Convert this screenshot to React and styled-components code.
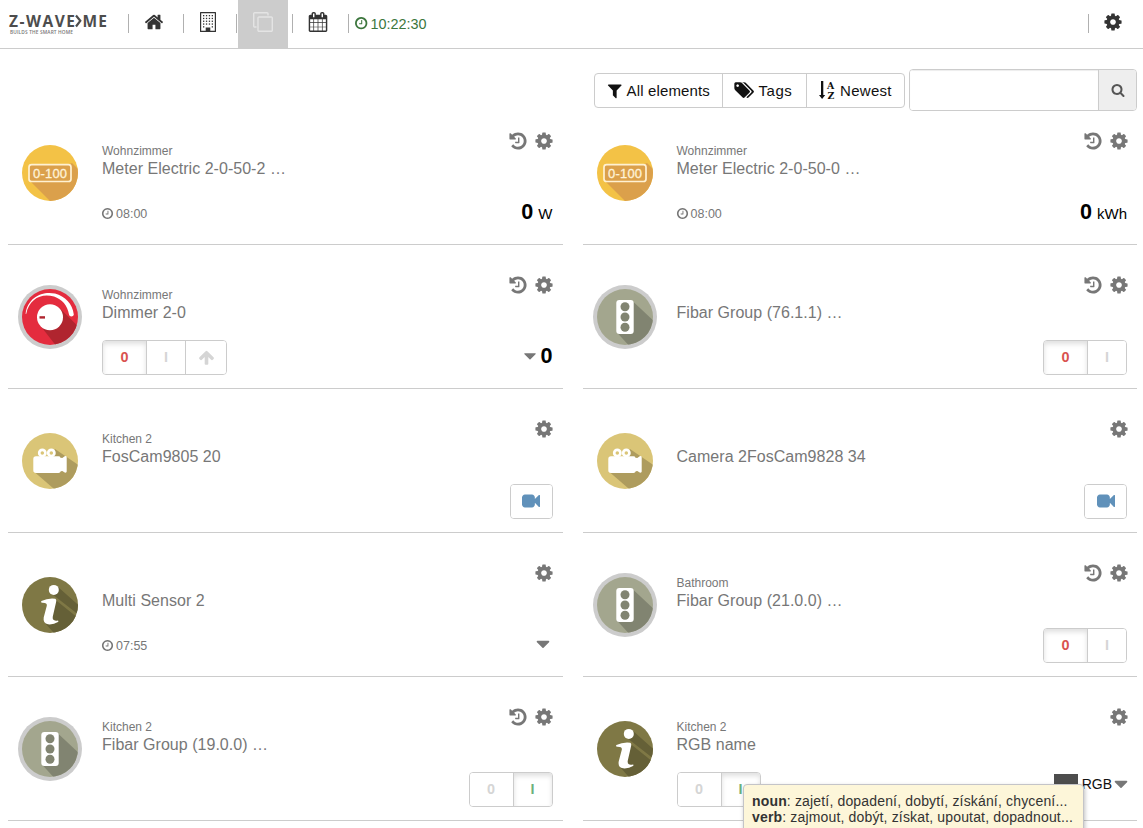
import React from 'react';
import styled, { createGlobalStyle, css } from 'styled-components';

const Global = createGlobalStyle`
  *, *::before, *::after { box-sizing: border-box; }
  html, body { margin: 0; padding: 0; }
  body {
    height: 828px;
    overflow: hidden;
    background: #fff;
    color: #111;
    font-family: "Liberation Sans", Arial, sans-serif;
    font-size: 14px;
  }
`;

const paths = {
  home: 'M1472 992v480q0 26-19 45t-45 19h-384v-384h-256v384h-384q-26 0-45-19t-19-45v-480q0-1 .5-3t.5-3l575-474 575 474q1 2 1 6zm223-69l-62 74q-8 9-21 11h-3q-13 0-21-7l-692-577-692 577q-12 8-24 7-13-2-21-11l-62-74q-8-10-7-23.5t11-21.5l719-599q32-26 76-26t76 26l244 204v-195q0-14 9-23t23-9h192q14 0 23 9t9 23v408l219 182q10 8 11 21.5t-7 23.5z',
  cog: 'M1152 896q0-106-75-181t-181-75-181 75-75 181 75 181 181 75 181-75 75-181zm512-109v222q0 12-8 23t-20 13l-185 28q-19 54-39 91 35 50 107 138 10 12 10 25t-9 23q-27 37-99 108t-94 71q-12 0-26-9l-138-108q-44 23-91 38-16 136-29 186-7 28-36 28h-222q-14 0-24.5-8.5t-11.5-21.5l-28-184q-49-16-90-37l-141 107q-10 9-25 9-14 0-25-11-126-114-165-168-7-10-7-23 0-12 8-23 15-21 51-66.5t54-70.5q-27-50-41-99l-183-27q-13-2-21-12.5t-8-23.5v-222q0-12 8-23t19-13l186-28q14-46 39-92-40-57-107-138-10-12-10-24 0-10 9-23 26-36 98.5-107.5t94.5-71.5q13 0 26 10l138 107q44-23 91-38 16-136 29-186 7-28 36-28h222q14 0 24.5 8.5t11.5 21.5l28 184q49 16 90 37l142-107q9-9 24-9 13 0 25 10 129 119 165 170 7 8 7 22 0 12-8 23-15 21-51 66.5t-54 70.5q26 50 41 98l183 28q13 2 21 12.5t8 23.5z',
  history: 'M1664 896q0 156-61 298t-164 245-245 164-298 61q-172 0-327-72.5t-264-204.5q-7-10-6.5-22.5t8.5-20.5l137-138q10-9 25-9 16 2 23 12 73 95 179 147t225 52q104 0 198.5-40.5t163.5-109.5 109.5-163.5 40.5-198.5-40.5-198.5-109.5-163.5-163.5-109.5-198.5-40.5q-98 0-188 35.5t-160 101.5l137 138q31 30 14 69-17 40-59 40h-448q-26 0-45-19t-19-45v-448q0-42 40-59 39-17 69 14l130 129q107-101 244.5-156.5t284.5-55.5q156 0 298 61t245 164 164 245 61 298zm-640-288v448q0 14-9 23t-23 9h-320q-14 0-23-9t-9-23v-64q0-14 9-23t23-9h224v-352q0-14 9-23t23-9h64q14 0 23 9t9 23z',
  clock: 'M1024 544v448q0 14-9 23t-23 9h-320q-14 0-23-9t-9-23v-64q0-14 9-23t23-9h224v-352q0-14 9-23t23-9h64q14 0 23 9t9 23zm416 352q0-148-73-273t-198-198-273-73-273 73-198 198-73 273 73 273 198 198 273 73 273-73 198-198 73-273zm224 0q0 209-103 385.5t-279.5 279.5-385.5 103-385.5-103-279.5-279.5-103-385.5 103-385.5 279.5-279.5 385.5-103 385.5 103 279.5 279.5 103 385.5z',
  filter: 'M1595 295q17 41-14 70l-493 493v742q0 42-39 59-13 5-25 5-27 0-45-19l-256-256q-19-19-19-45v-486l-493-493q-31-29-14-70 17-39 59-39h1280q42 0 59 39z',
  tags: 'M384 448q0-53-37.5-90.5t-90.5-37.5-90.5 37.5-37.5 90.5 37.5 90.5 90.5 37.5 90.5-37.5 37.5-90.5zm1067 576q0 53-37 90l-491 492q-39 37-91 37-53 0-90-37l-715-716q-38-37-64.5-101t-26.5-117v-416q0-52 38-90t90-38h416q53 0 117 26.5t102 64.5l715 714q37 39 37 91zm384 0q0 53-37 90l-491 492q-39 37-91 37-36 0-59-14t-53-45l470-470q37-37 37-90 0-52-37-91l-715-714q-38-38-102-64.5t-117-26.5h224q53 0 117 26.5t102 64.5l715 714q37 39 37 91z',
  search: 'M1216 832q0-185-131.5-316.5t-316.5-131.5-316.5 131.5-131.5 316.5 131.5 316.5 316.5 131.5 316.5-131.5 131.5-316.5zm512 832q0 52-38 90t-90 38q-54 0-90-38l-343-342q-179 124-399 124-143 0-273.5-55.5t-225-150-150-225-55.5-273.5 55.5-273.5 150-225 225-150 273.5-55.5 273.5 55.5 225 150 150 225 55.5 273.5q0 220-124 399l343 343q37 37 37 90z',
  up: 'M1675 971q0 51-37 90l-75 75q-38 38-91 38-54 0-90-38l-294-293v704q0 52-37.5 84.5t-90.5 32.5h-128q-53 0-90.5-32.5t-37.5-84.5v-704l-294 293q-36 38-90 38t-90-38l-75-75q-38-38-38-90 0-53 38-91l651-651q35-37 90-37 54 0 91 37l651 651q37 39 37 91z',
  caret: 'M1408 704q0 26-19 45l-448 448q-19 19-45 19t-45-19l-448-448q-19-19-19-45t19-45 45-19h896q26 0 45 19t19 45z',
  video: 'M1792 352v1088q0 42-39 59-13 5-25 5-27 0-45-19l-403-403v166q0 119-84.5 203.5t-203.5 84.5h-704q-119 0-203.5-84.5t-84.5-203.5v-704q0-119 84.5-203.5t203.5-84.5h704q119 0 203.5 84.5t84.5 203.5v165l403-402q18-19 45-19 12 0 25 5 39 17 39 59z',
  clone: 'M1664 1632v-1088q0-13-9.5-22.5t-22.5-9.5h-1088q-13 0-22.5 9.5t-9.5 22.5v1088q0 13 9.5 22.5t22.5 9.5h1088q13 0 22.5-9.5t9.5-22.5zm128-1088v1088q0 66-47 113t-113 47h-1088q-66 0-113-47t-47-113v-1088q0-66 47-113t113-47h1088q66 0 113 47t47 113zm-384-384v160h-128v-160q0-13-9.5-22.5t-22.5-9.5h-1088q-13 0-22.5 9.5t-9.5 22.5v1088q0 13 9.5 22.5t22.5 9.5h160v128h-160q-66 0-113-47t-47-113v-1088q0-66 47-113t113-47h1088q66 0 113 47t47 113z',
  calendar: 'M192 1664h288v-288h-288v288zm352 0h320v-288h-320v288zm-352-352h288v-320h-288v320zm352 0h320v-320h-320v320zm-352-384h288v-288h-288v288zm736 736h320v-288h-320v288zm-384-736h320v-288h-320v288zm768 736h288v-288h-288v288zm-384-352h320v-320h-320v320zm-352-864v-288q0-13-9.5-22.5t-22.5-9.5h-64q-13 0-22.5 9.5t-9.5 22.5v288q0 13 9.5 22.5t22.5 9.5h64q13 0 22.5-9.5t9.5-22.5zm736 864h288v-320h-288v320zm-384-384h320v-288h-320v288zm384 0h288v-288h-288v288zm32-480v-288q0-13-9.5-22.5t-22.5-9.5h-64q-13 0-22.5 9.5t-9.5 22.5v288q0 13 9.5 22.5t22.5 9.5h64q13 0 22.5-9.5t9.5-22.5zm384-64v1280q0 52-38 90t-90 38h-1408q-52 0-90-38t-38-90v-1280q0-52 38-90t90-38h128v-96q0-66 47-113t113-47h64q66 0 113 47t47 113v96h384v-96q0-66 47-113t113-47h64q66 0 113 47t47 113v96h128q52 0 90 38t38 90z',
};

const Svg = styled.svg`
  display: block;
  flex: none;
  fill: currentColor;
  overflow: visible;
`;

const Icon = ({ name, size = 20 }) => (
  <Svg width={size} height={size} viewBox="0 0 1792 1792">
    <path d={paths[name]} />
  </Svg>
);

const Building = () => (
  <Svg width="16" height="20" viewBox="0 0 16 20">
    <path fillRule="evenodd" d="M.6 0h14.8q.6 0 .6.6v18.8q0 .6-.6.6H.6q-.6 0-.6-.6V.6Q0 0 .6 0zM1.200 1.200v17.600h4.500v-3.300h4.600v3.300h4.500V1.200z" />
    {[3, 5.8, 8.6, 11.4, 14.2].map((y) =>
      [3, 5.9, 8.8, 11.7].map((x) =>
        y > 14 && x > 5 && x < 10 ? null : <rect key={`${x}-${y}`} x={x} y={y} width="1.3" height="1.3" />
      )
    )}
  </Svg>
);

const SortAlpha = () => (
  <Svg width="17" height="19" viewBox="0 0 17 19">
    <path d="M2 0h2.3v14H6.2L3.1 18 0 14h2z" />
    <text x="8" y="7.6" fontFamily="DejaVu Serif, serif" fontWeight="700" fontSize="9.4">A</text>
    <text x="8.4" y="17.6" fontFamily="DejaVu Serif, serif" fontWeight="700" fontSize="9.4">Z</text>
  </Svg>
);

/* ---- device pictograms ---- */

const art = {
  meter: {
    base: '#f3c246',
    dark: '#dba04b',
    shadow: 'M12 40 54 22 72 40 44 72Z',
    draw: (
      <>
        <rect x="11" y="23.7" width="42" height="16.8" rx="2.6" fill="#dba04b" stroke="#fff1d2" strokeWidth="1.7" />
        <text x="32.1" y="37" textAnchor="middle" textLength="34" fontFamily="Liberation Sans, sans-serif" fontSize="13" fill="#fff3d8" stroke="#fff3d8" strokeWidth="0.3">0-100</text>
      </>
    ),
  },
  dimmer: {
    base: '#e42c3e',
    dark: '#b0252f',
    shadow: 'M41 22.5 72 53 50 76 23 41.5Z',
    draw: (
      <>
        <circle cx="32" cy="32.3" r="13" fill="#fff" />
        <rect x="21.5" y="31.2" width="5.5" height="2.4" fill="#b0252f" />
        <path d="M7.6 29C9.5 12 25 5.6 37 8.6 47 11.2 54.5 19 55.8 29.5 55.600 32 51.5 32.3 51 29.6 49.5 20.5 44 14.200 36 11.600 24 7.600 11 13.500 8.300 28.8Z" fill="#fff" />
      </>
    ),
  },
  light: {
    base: '#a3a68e',
    dark: '#818471',
    shadow: 'M40.5 17 76 50 50 76 24 47.5Z',
    draw: (
      <>
        <rect x="23.3" y="15" width="17.4" height="34" rx="3" fill="#fff" />
        <circle cx="32" cy="21.7" r="4.5" fill="#818471" />
        <circle cx="32" cy="32" r="4.5" fill="#818471" />
        <circle cx="32" cy="42.2" r="4.5" fill="#818471" />
      </>
    ),
  },
  camera: {
    base: '#dac577',
    dark: '#ae9c5e',
    shadow: 'M37 20 64 38.500 50 72 17 43.500Z',
    draw: (
      <>
        <path d="M18 27.300h22.500q1.500 0 2 1.400l1.800.300 2.400-1.800q2-.500 2 1.200v14.200q0 1.500-2 1l-2.400-1.700-1.500.400q-.500 1.600-2.300 1.600H18q-2.700 0-2.700-2.600V30Q15.300 27.300 18 27.300z" fill="#fff" />
        <g fill="#dac577" stroke="#fff" strokeWidth="2.700">
          <circle cx="24.300" cy="23.900" r="3.100" />
          <circle cx="33.300" cy="23.900" r="3.100" />
        </g>
      </>
    ),
  },
  info: {
    base: '#7f7845',
    dark: '#656037',
    shadow: 'M39.500 13.500 66 37 64 44.500 34 21ZM37 26.500 62 46.500 50 76 27 50Z',
    draw: (
      <>
        <circle cx="35.8" cy="16.900" r="5" fill="#fff" />
        <path d="M23.400 28Q30 24.800 37.200 25.700 38.800 26.300 38 29.500L34.800 43.500Q33.800 48.600 40 47.400 41 48 40 49 35.500 51.800 30 51.300 24.800 50.500 25.700 44.500L28.800 32.800Q29.500 29.400 23.800 29.700 22.500 29 23.400 28Z" fill="#fff" />
      </>
    ),
  },
};

const Pictogram = ({ kind, ring, id }) => {
  const a = art[kind];
  return (
    <Svg width="64" height="64" viewBox="0 0 64 64">
      <clipPath id={id}>
        <circle cx="32" cy="32" r="28" />
      </clipPath>
      {ring && <circle cx="32" cy="32" r="32" fill="#ccc" />}
      <circle cx="32" cy="32" r="28" fill={a.base} />
      <path d={a.shadow} fill={a.dark} clipPath={`url(#${id})`} />
      {a.draw}
    </Svg>
  );
};

/* ---- page header ---- */

const Nav = styled.header`
  display: flex;
  align-items: flex-start;
  height: 49px;
  border-bottom: 1px solid #ccc;
  color: #333;
`;

const Logo = styled.svg`
  display: block;
  width: 128px;
  height: 48px;
  flex: none;
`;

const NavItem = styled.div`
  display: flex;
  align-items: center;
  justify-content: center;
  flex: none;
  width: ${(p) => p.$w}px;
  height: 48px;
  margin-right: ${(p) => p.$mr || 0}px;
  padding: 0 ${(p) => p.$pr || 0}px 5px 0;
  ${(p) => p.$active && css`
    background: #ccc;
    color: #e4e4e4;
  `}
`;

const Divider = styled.span`
  flex: none;
  width: 1px;
  height: 19px;
  margin: 14px ${(p) => p.$gap || 0}px 0 0;
  background: #b0b0b0;
`;

const Clock = styled.div`
  display: flex;
  align-items: center;
  gap: 2px;
  height: 48px;
  padding: 0 0 1px 5px;
  color: #3c763d;
  font-size: 14.4px;
`;

const Spacer = styled.div`
  flex: 1;
`;

/* ---- filter bar ---- */

const Page = styled.main`
  padding: 0 6px 0 8px;
`;

const Toolbar = styled.div`
  display: flex;
  justify-content: flex-end;
  align-items: flex-start;
  gap: 4px;
  height: 52px;
  padding-top: 20px;
`;

const FilterGroup = styled.div`
  display: flex;
  height: 35px;
  margin-top: 4px;
  border: 1px solid #ccc;
  border-radius: 4px;
`;

const FilterButton = styled.button`
  display: flex;
  align-items: center;
  gap: ${(p) => p.$gap}px;
  width: ${(p) => p.$w}px;
  padding: 0 0 0 ${(p) => p.$pl}px;
  border: 0;
  background: none;
  color: #111;
  font: 15px "Liberation Sans", Arial, sans-serif;
  letter-spacing: ${(p) => p.$track || 0.15}px;
  white-space: nowrap;
  & + & { border-left: 1px solid #ccc; }
`;

const SearchBox = styled.div`
  display: flex;
  width: 228px;
  height: 42px;
  border: 1px solid #ccc;
  border-radius: 4px;
  overflow: hidden;
`;

const SearchInput = styled.input`
  flex: 1;
  min-width: 0;
  border: 0;
  outline: 0;
  background: #fff;
  box-shadow: inset 0 1px 1px rgba(0, 0, 0, 0.075);
`;

const SearchButton = styled.button`
  display: flex;
  align-items: center;
  justify-content: center;
  width: 38px;
  padding: 0;
  border: 0;
  border-left: 1px solid #ccc;
  background: #eee;
  color: #555;
`;

/* ---- device cards ---- */

const Grid = styled.div`
  display: grid;
  grid-template-columns: 1fr 1fr;
  column-gap: 20px;
`;

const Card = styled.article`
  display: flex;
  gap: 20px;
  height: 144px;
  padding: 0 10px 13px;
  border-bottom: 1px solid #ccc;
  color: #777;
`;

const Picture = styled.div`
  padding-top: 40px;
`;

const Body = styled.div`
  flex: 1;
  display: flex;
  flex-direction: column;
  justify-content: space-between;
  min-width: 0;
`;

const Head = styled.div`
  display: flex;
  justify-content: space-between;
`;

const Names = styled.div`
  padding-top: 43px;
`;

const Room = styled.div`
  height: 15px;
  font-size: 12px;
  line-height: 15px;
`;

const Title = styled.div`
  font-size: 16px;
  line-height: 20px;
  letter-spacing: 0.03px;
  white-space: nowrap;
`;

const Actions = styled.div`
  display: flex;
  gap: 6px;
  padding-top: 30px;
  margin-right: -1.5px;
`;

const Foot = styled.div`
  display: flex;
  align-items: center;
  justify-content: space-between;
  height: 35px;
`;

const Updated = styled.div`
  display: flex;
  align-items: center;
  gap: 2px;
  margin-left: -1px;
  font-size: 12.5px;
`;

const Reading = styled.div`
  display: flex;
  align-items: baseline;
  gap: 5px;
  padding-bottom: 4px;
  color: #000;
  font-size: 15px;
`;

const Amount = styled.strong`
  font-size: 21.6px;
  line-height: 24px;
`;

const Level = styled.div`
  display: flex;
  align-items: center;
  padding-bottom: ${(p) => p.$lift || 3}px;
  margin-right: ${(p) => p.$pull || 0}px;
  color: #777;
`;

const LevelValue = styled(Amount)`
  color: #000;
`;

const Rgb = styled.span`
  color: #111;
  font-size: 14px;
  margin: 0 -2px 0 4px;
`;

const Swatch = styled.span`
  width: 24px;
  height: 20px;
  background: #4d4d4d;
`;

const ButtonGroup = styled.div`
  display: flex;
  height: 35px;
  border: 1px solid #ccc;
  border-radius: 4px;
  overflow: hidden;
`;

const tones = { off: '#d9534f', on: '#6cb17c', idle: '#d5d5d5', link: '#6091ba' };

const StateButton = styled.button`
  display: flex;
  align-items: center;
  justify-content: center;
  width: ${(p) => p.$w}px;
  padding: 0 0 1px;
  border: 0;
  background: #fff;
  color: ${(p) => tones[p.$tone]};
  font: bold 14.4px "Liberation Sans", Arial, sans-serif;
  & + & { border-left: 1px solid #ccc; }
  ${(p) => p.$pressed && css`
    box-shadow: inset 0 3px 5px rgba(0, 0, 0, 0.125);
  `}
`;

const Switch = ({ on, dim }) => (
  <ButtonGroup>
    <StateButton $w={43} $tone={on ? 'idle' : 'off'} $pressed={!on}>0</StateButton>
    <StateButton $w={39} $tone={on ? 'on' : 'idle'} $pressed={on}>I</StateButton>
    {dim && (
      <StateButton $w={41} $tone="idle"><Icon name="up" size={17} /></StateButton>
    )}
  </ButtonGroup>
);

const CameraButton = () => (
  <ButtonGroup>
    <StateButton $w={41} $tone="link"><Icon name="video" size={18} /></StateButton>
  </ButtonGroup>
);

const Time = ({ children }) => (
  <Updated><Icon name="clock" size={13} />{children}</Updated>
);

const Value = ({ amount, unit }) => (
  <Reading><Amount>{amount}</Amount>{unit}</Reading>
);

const devices = [
  { kind: 'meter', room: 'Wohnzimmer', title: 'Meter Electric 2-0-50-2 …', history: true, left: <Time>08:00</Time>, right: <Value amount="0" unit="W" /> },
  { kind: 'meter', room: 'Wohnzimmer', title: 'Meter Electric 2-0-50-0 …', history: true, left: <Time>08:00</Time>, right: <Value amount="0" unit="kWh" /> },
  { kind: 'dimmer', ring: true, room: 'Wohnzimmer', title: 'Dimmer 2-0', history: true, left: <Switch dim />, right: <Level><Icon name="caret" size={20} /><LevelValue>0</LevelValue></Level> },
  { kind: 'light', ring: true, title: 'Fibar Group (76.1.1) …', history: true, right: <Switch /> },
  { kind: 'camera', room: 'Kitchen 2', title: 'FosCam9805 20', right: <CameraButton /> },
  { kind: 'camera', title: 'Camera 2FosCam9828 34', right: <CameraButton /> },
  { kind: 'info', title: 'Multi Sensor 2', left: <Time>07:55</Time>, right: <Level $pull={-1}><Icon name="caret" size={22} /></Level> },
  { kind: 'light', ring: true, room: 'Bathroom', title: 'Fibar Group (21.0.0) …', history: true, right: <Switch /> },
  { kind: 'light', ring: true, room: 'Kitchen 2', title: 'Fibar Group (19.0.0) …', history: true, right: <Switch on /> },
  { kind: 'info', room: 'Kitchen 2', title: 'RGB name', left: <Switch on />, right: <Level $pull={-5} $lift={12}><Swatch /><Rgb>RGB</Rgb><Icon name="caret" size={22} /></Level> },
];

const Tooltip = styled.div`
  position: absolute;
  left: 743px;
  top: 784px;
  width: 341px;
  height: 60px;
  padding: 8px;
  border: 1px solid #c4c4c8;
  border-radius: 4px;
  background: #fdf6d9;
  box-shadow: 1px 2px 4px rgba(0, 0, 0, 0.25);
  color: #333;
  font-size: 14px;
  line-height: 16px;
  letter-spacing: 0.16px;
  white-space: nowrap;
`;

export default function App() {
  return (
    <>
      <Global />
      <Nav>
        <Logo viewBox="0 0 128 48" fill="#4d4d4d">
          <text x="9" y="26.500" textLength="66" fontFamily="Open Sans, sans-serif" fontWeight="700" fontSize="15.500">Z-WAVE</text>
          <path d="M76 15.500 80.300 20.800 76 26.500" fill="none" stroke="#4d4d4d" strokeWidth="2.200" />
          <text x="82.500" y="26.500" textLength="24.500" fontFamily="Open Sans, sans-serif" fontWeight="700" fontSize="15.500">ME</text>
          <text x="10" y="33.800" textLength="63" fontFamily="Open Sans, sans-serif" fontWeight="600" fontSize="4.800" fill="#777">BUILDS THE SMART HOME</text>
        </Logo>
        <Divider />
        <NavItem $w={54} $pr={4}><Icon name="home" /></NavItem>
        <Divider />
        <NavItem $w={52} $pr={4}><Building /></NavItem>
        <Divider $gap={1} />
        <NavItem $w={50} $mr={4} $active><Icon name="clone" /></NavItem>
        <Divider />
        <NavItem $w={55} $pr={5}><Icon name="calendar" /></NavItem>
        <Divider />
        <Clock><Icon name="clock" size={14.4} />10:22:30</Clock>
        <Spacer />
        <Divider />
        <NavItem $w={54} $pr={6}><Icon name="cog" /></NavItem>
      </Nav>
      <Page>
        <Toolbar>
          <FilterGroup>
            <FilterButton $w={127} $pl={11} $gap={3}><Icon name="filter" size={17.5} />All elements</FilterButton>
            <FilterButton $w={84} $pl={12} $gap={5} $track={0.55}><Icon name="tags" size={18.5} />Tags</FilterButton>
            <FilterButton $w={98} $pl={12} $gap={4} $track={0.3}><SortAlpha />Newest</FilterButton>
          </FilterGroup>
          <SearchBox>
            <SearchInput />
            <SearchButton><Icon name="search" size={14} /></SearchButton>
          </SearchBox>
        </Toolbar>
        <Grid>
          {devices.map((d, i) => (
            <Card key={i}>
              <Picture><Pictogram kind={d.kind} ring={d.ring} id={`disc-${i}`} /></Picture>
              <Body>
                <Head>
                  <Names>
                    <Room>{d.room}</Room>
                    <Title>{d.title}</Title>
                  </Names>
                  <Actions>
                    {d.history && <Icon name="history" />}
                    <Icon name="cog" />
                  </Actions>
                </Head>
                <Foot>
                  {d.left || <span />}
                  {d.right}
                </Foot>
              </Body>
            </Card>
          ))}
        </Grid>
      </Page>
      <Tooltip>
        <div><b>noun</b>: zajetí, dopadení, dobytí, získání, chycení...</div>
        <div><b>verb</b>: zajmout, dobýt, získat, upoutat, dopadnout...</div>
      </Tooltip>
    </>
  );
}
